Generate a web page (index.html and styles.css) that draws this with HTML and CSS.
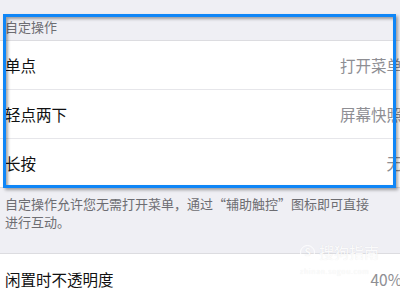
FILE: index.html
```html
<!DOCTYPE html>
<html lang="zh-CN">
<head>
  <meta charset="UTF-8">
  <meta name="viewport" content="width=device-width, initial-scale=1.0">
  <title>辅助触控</title>
  <link rel="stylesheet" href="styles.css">
</head>
<body>
  <div class="page">
    <!-- 自定操作 -->
    <div class="group-title">自定操作</div>
    <div class="group">
      <div class="row">
        <span class="label">单点</span>
        <span class="value">打开菜单</span>
      </div>
      <div class="row">
        <span class="label">轻点两下</span>
        <span class="value">屏幕快照</span>
      </div>
      <div class="row">
        <span class="label">长按</span>
        <span class="value">无</span>
      </div>
    </div>
    <div class="group-footer">
      自定操作允许您无需打开菜单，通过“辅助触控”图标即可直接<br>进行互动。
    </div>

    <!-- 不透明度 -->
    <div class="group group-top">
      <div class="row row-tall">
        <span class="label">闲置时不透明度</span>
        <span class="value">40%</span>
      </div>
    </div>

    <!-- highlight frame drawn over the list -->
    <div class="frame"></div>

    <div class="watermark">
      <div class="wm-logo"><span class="wm-s">S</span>搜狗指南</div>
      <div class="wm-url">zhinan.sogou.com</div>
    </div>
  </div>
</body>
</html>
```

FILE: styles.css
```css
html, body {
  margin: 0;
  overflow: hidden;
}
body {
  background-color: #efeff4;
  font-family: "Noto Sans CJK SC", "Noto Sans", sans-serif;
}
.page {
  position: relative;
  width: 402px;
}
.group-title {
  height: 41px;
  box-sizing: border-box;
  padding: 19px 0 0 5px;
  font-size: 13px;
  line-height: 16px;
  color: #6d6d72;
  border-bottom: 1px solid #dcdce0;
}
.group {
  background: #fff;
}
.group-top {
  border-top: 1px solid #dcdce0;
}
.row {
  display: flex;
  align-items: center;
  justify-content: space-between;
  height: 48px;
  padding-left: 5px;
  border-bottom: 1px solid #e6e6ea;
}
.row:last-child {
  border-bottom-color: #dcdce0;
}
.row-tall {
  height: 50px;
}
.label {
  font-size: 15.5px;
  color: #111;
}
.value {
  font-size: 15.5px;
  color: #8e8e93;
}
.group-footer {
  padding: 7px 20px 22px 5px;
  font-size: 13px;
  line-height: 18px;
  color: #6d6d72;
}
.frame {
  position: absolute;
  left: 3px;
  top: 14px;
  width: 387px;
  height: 168px;
  border: 3px solid #0f86f7;
  box-shadow: 2px 2px 3px rgba(0, 0, 0, 0.35), inset 2px 2px 3px rgba(0, 0, 0, 0.35);
}
.watermark {
  position: absolute;
  left: 300px;
  top: 243px;
  color: rgba(255, 255, 255, 0.9);
  text-shadow: 0 0 1px rgba(0, 0, 0, 0.1);
}
.wm-logo {
  display: flex;
  align-items: center;
  gap: 4px;
  font-size: 15px;
  line-height: 18px;
}
.wm-s {
  display: inline-flex;
  align-items: center;
  justify-content: center;
  width: 13px;
  height: 13px;
  border: 1.5px solid rgba(255, 255, 255, 0.9);
  border-radius: 50%;
  font-size: 10px;
  font-weight: bold;
  line-height: 1;
}
.wm-url {
  margin-top: 5px;
  font-size: 7px;
  letter-spacing: 0.6px;
}
```
